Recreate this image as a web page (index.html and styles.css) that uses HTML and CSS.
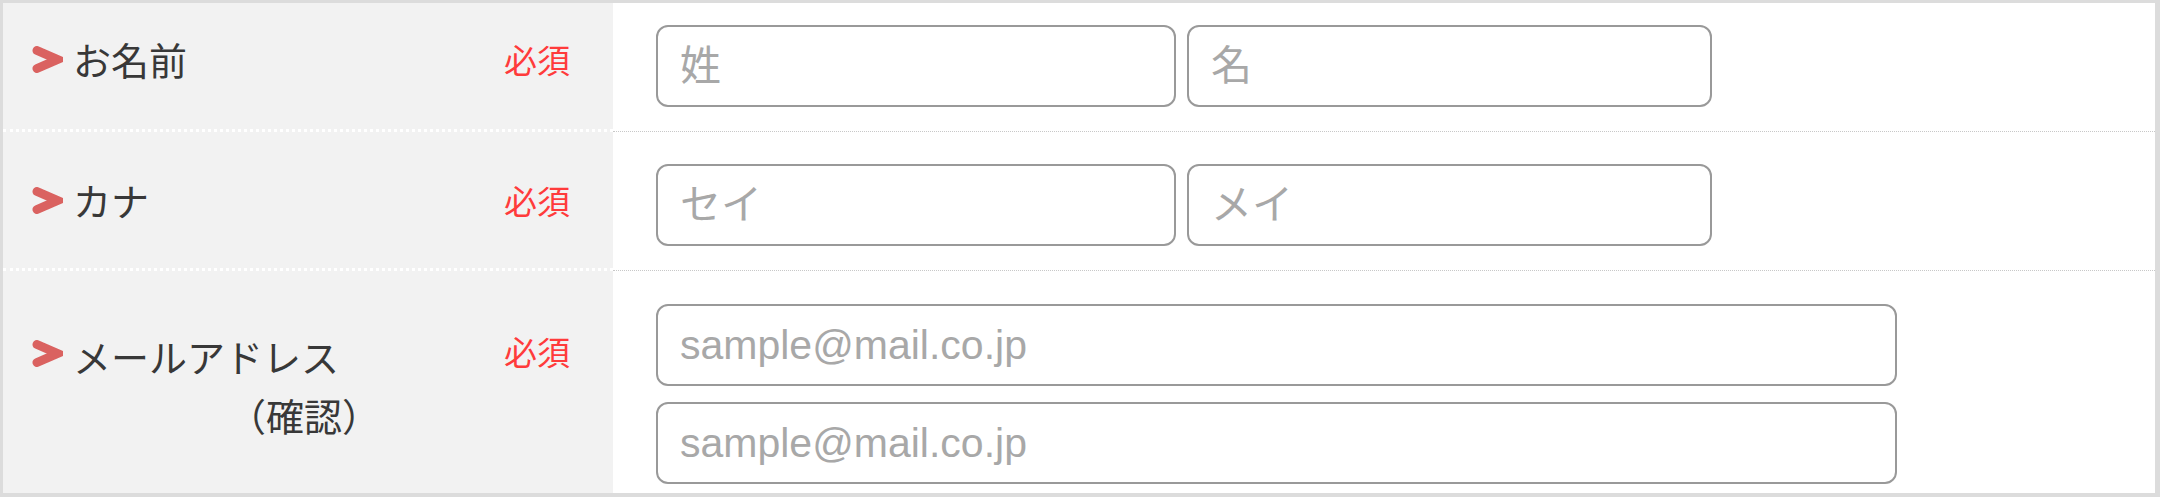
FILE: index.html
```html
<!DOCTYPE html>
<html lang="ja">
<head>
    <meta charset="UTF-8">
    <meta name="viewport" content="width=device-width, initial-scale=1.0">
    <title>お問い合わせフォーム</title>
    <link rel="stylesheet" href="styles.css">
</head>
<body>
    <div class="form-table">
        <div class="row row-name">
            <div class="label-cell">
                <svg class="chevron" width="31" height="27" viewBox="0 0 31 27"><polyline points="5,4.5 25.5,13.5 5,22.5" /></svg>
                <span class="label">お名前</span>
                <span class="req">必須</span>
            </div>
            <div class="field-cell">
                <input type="text" class="half" placeholder="姓">
                <input type="text" class="half" placeholder="名">
            </div>
        </div>
        <div class="row row-kana">
            <div class="label-cell">
                <svg class="chevron" width="31" height="27" viewBox="0 0 31 27"><polyline points="5,4.5 25.5,13.5 5,22.5" /></svg>
                <span class="label">カナ</span>
                <span class="req">必須</span>
            </div>
            <div class="field-cell">
                <input type="text" class="half" placeholder="セイ">
                <input type="text" class="half" placeholder="メイ">
            </div>
        </div>
        <div class="row row-mail">
            <div class="label-cell">
                <svg class="chevron" width="31" height="27" viewBox="0 0 31 27"><polyline points="5,4.5 25.5,13.5 5,22.5" /></svg>
                <span class="label">メールアドレス<span class="sub">（確認）</span></span>
                <span class="req">必須</span>
            </div>
            <div class="field-cell stack">
                <input type="email" class="full" placeholder="sample@mail.co.jp">
                <input type="email" class="full" placeholder="sample@mail.co.jp">
            </div>
        </div>
    </div>
</body>
</html>
```

FILE: styles.css
```css
* {
    margin: 0;
    padding: 0;
    box-sizing: border-box;
}

body {
    background: #ffffff;
    font-family: "Noto Sans CJK JP", "Noto Sans", sans-serif;
}

.form-table {
    width: 2160px;
    height: 497px;
    border: 3px solid #dcdcdc;
    border-right-width: 5px;
    border-bottom-width: 4px;
    display: flex;
    flex-direction: column;
}

.row {
    display: grid;
    grid-template-columns: 610px 1fr;
}

.row-mail {
    flex: 1;
}

.label-cell {
    background: #f2f2f2;
    border-bottom: 3px dotted #ffffff;
    display: flex;
    align-items: center;
    padding: 0 43px 0 29px;
    color: #383838;
    font-size: 38px;
}

.row-mail .label-cell {
    border-bottom: none;
    align-items: flex-start;
    padding-top: 56px;
}

.row-name .label-cell {
    padding-bottom: 14px;
}

.chevron {
    flex: none;
    margin-right: 10px;
}

.chevron polyline {
    fill: none;
    stroke: #da6260;
    stroke-width: 9;
    stroke-linecap: round;
    stroke-linejoin: miter;
}

.row-mail .chevron {
    margin-top: 13px;
}

.label {
    line-height: 1.55;
}

.sub {
    display: block;
    padding-left: 155px;
}

.req {
    margin-left: auto;
    color: #ff3b3b;
    font-size: 33px;
}

.field-cell {
    border-bottom: 1px dotted #c8c8c8;
    display: flex;
    gap: 11px;
    padding: 22px 0 24px 43px;
}

.row-kana .field-cell {
    padding: 32px 0 24px 43px;
}

.row-mail .field-cell {
    border-bottom: none;
    padding: 33px 0 0 43px;
}

.stack {
    flex-direction: column;
    gap: 16px;
}

input {
    height: 82px;
    border: 2px solid #999999;
    border-radius: 12px;
    padding: 0 22px;
    font-family: "Liberation Sans", "Noto Sans CJK JP", sans-serif;
    font-size: 41px;
    color: #333333;
    background: #ffffff;
    outline: none;
}

input::placeholder {
    color: #a8a8a8;
}

.half {
    width: 520px;
}

.half + .half {
    width: 525px;
}

.full {
    width: 1241px;
}
```
